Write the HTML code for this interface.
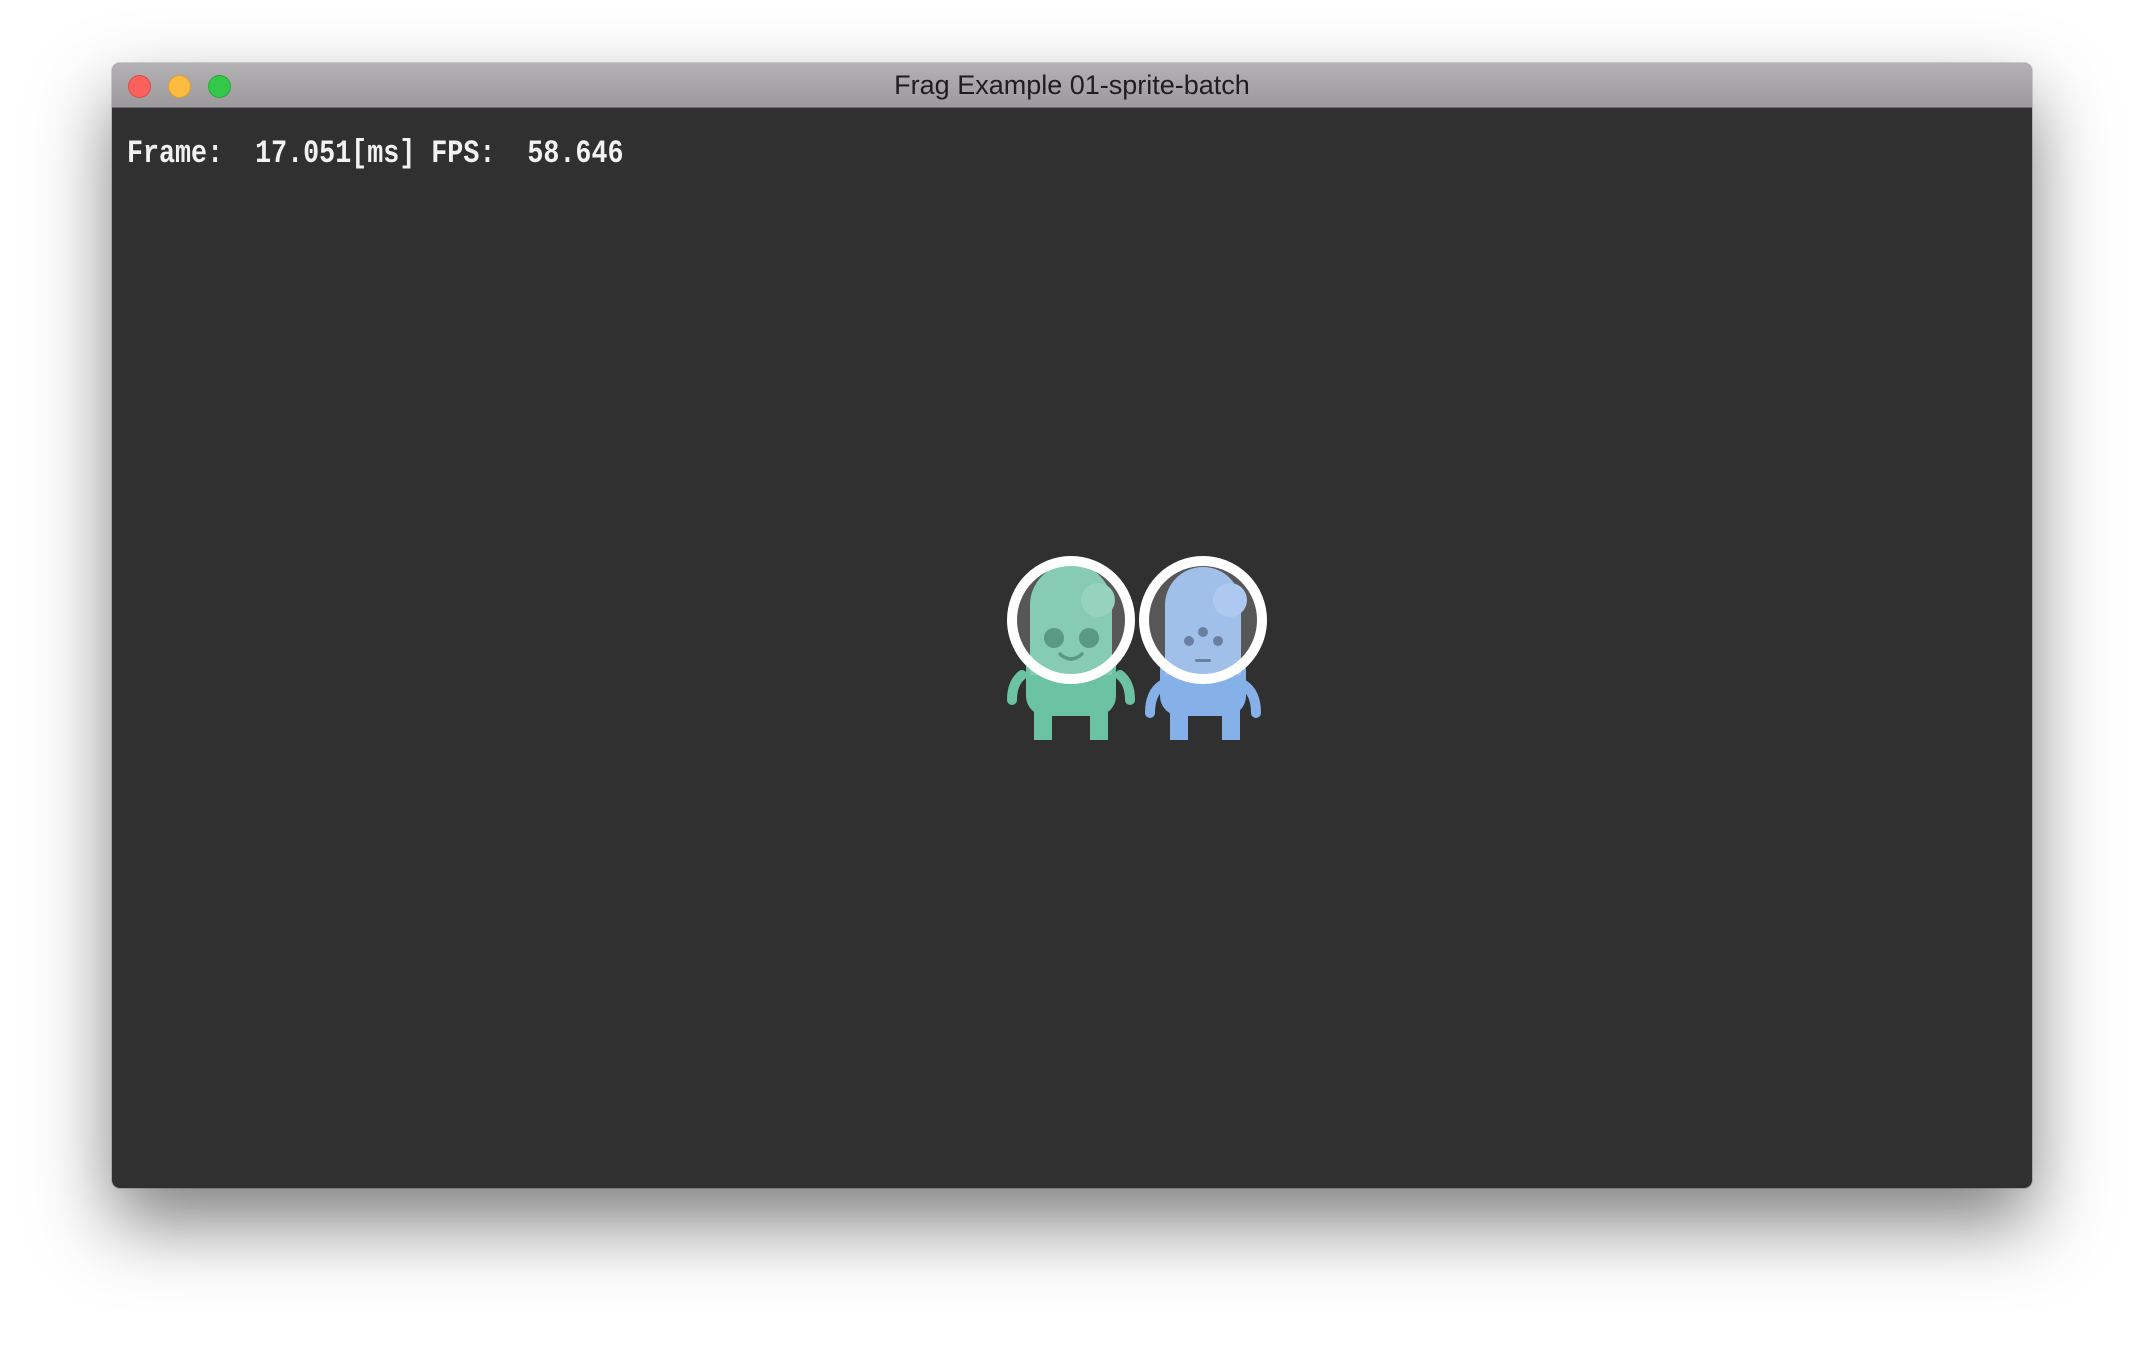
<!DOCTYPE html>
<html><head><meta charset="utf-8"><style>
html,body{margin:0;padding:0;width:2144px;height:1348px;background:#fff;overflow:hidden}
.win{position:absolute;left:112px;top:63px;width:1920px;height:1125px;border-radius:8px;overflow:hidden;box-shadow:0 35px 75px rgba(0,0,0,0.5),0 0 0 1px rgba(0,0,0,0.15);background:#303030}
.tb{position:absolute;left:0;top:0;width:100%;height:44px;background:linear-gradient(#b3b1b3,#9c9a9c);border-bottom:1px solid #6e6e6e}
.tl{position:absolute;top:12px;width:21px;height:21px;border-radius:50%}
.title{position:absolute;left:0;right:0;top:7px;text-align:center;font:27px "Liberation Sans",sans-serif;color:#1e1e1e}
.fps{position:absolute;left:15px;top:74px;font:bold 26.7px "Liberation Mono",monospace;color:#f2f2f2;white-space:pre;transform:scaleY(1.2);transform-origin:left top}
</style></head><body>
<div class="win">
<div class="tb">
<div class="tl" style="left:16px;background:#fc605c;border:1px solid #de4a45"></div>
<div class="tl" style="left:56px;background:#fdbc40;border:1px solid #dfa02f"></div>
<div class="tl" style="left:96px;background:#34c84a;border:1px solid #26a83a"></div>
<div class="title">Frag Example 01-sprite-batch</div>
</div>
<div class="fps">Frame:  17.051[ms] FPS:  58.646</div>
<svg style="position:absolute;left:0;top:0" width="1920" height="1125">
<g transform="translate(-112,-63)">
<g>
<path d="M1022 675 q-10 8 -10 25" stroke="#6cc3a4" stroke-width="10" fill="none" stroke-linecap="round"/>
<path d="M1120 675 q10 8 10 25" stroke="#6cc3a4" stroke-width="10" fill="none" stroke-linecap="round"/>
<rect x="1026" y="640" width="90" height="76" rx="20" fill="#6cc3a4"/>
<rect x="1034" y="700" width="18" height="40" fill="#6cc3a4"/>
<rect x="1090" y="700" width="18" height="40" fill="#6cc3a4"/>
<circle cx="1071" cy="620" r="60" fill="#575757"/>
<path d="M1030 675 V605 a41 41 0 0 1 82 0 V675 Z" fill="#86ccb4"/>
<circle cx="1098" cy="600" r="17" fill="#95d3be"/>
<circle cx="1054" cy="638" r="10" fill="#5a9a84"/>
<circle cx="1089" cy="638" r="10" fill="#5a9a84"/>
<path d="M1060 654 q11 10 22 0" stroke="#5a9a84" stroke-width="3.5" fill="none" stroke-linecap="round"/>
<circle cx="1071" cy="620" r="59" fill="none" stroke="#fff" stroke-width="10"/>
</g>
<g>
<path d="M1162 685 q-12 8 -12 28" stroke="#86b0e8" stroke-width="10" fill="none" stroke-linecap="round"/>
<path d="M1244 685 q12 8 12 28" stroke="#86b0e8" stroke-width="10" fill="none" stroke-linecap="round"/>
<rect x="1160" y="650" width="86" height="66" rx="20" fill="#86b0e8"/>
<rect x="1170" y="700" width="18" height="40" fill="#86b0e8"/>
<rect x="1222" y="700" width="18" height="40" fill="#86b0e8"/>
<circle cx="1203" cy="620" r="60" fill="#575757"/>
<path d="M1165 675 V605 a38 38 0 0 1 76 0 V675 Z" fill="#a0c0ea"/>
<circle cx="1230" cy="600" r="17" fill="#adc9ef"/>
<circle cx="1203" cy="632" r="5" fill="#6b7fa3"/>
<circle cx="1189" cy="641" r="5" fill="#6b7fa3"/>
<circle cx="1218" cy="641" r="5" fill="#6b7fa3"/>
<rect x="1195" y="659" width="16" height="3" rx="1.5" fill="#6b7fa3"/>
<circle cx="1203" cy="620" r="59" fill="none" stroke="#fff" stroke-width="10"/>
</g>
</g>
</svg>
</div>
</body></html>
